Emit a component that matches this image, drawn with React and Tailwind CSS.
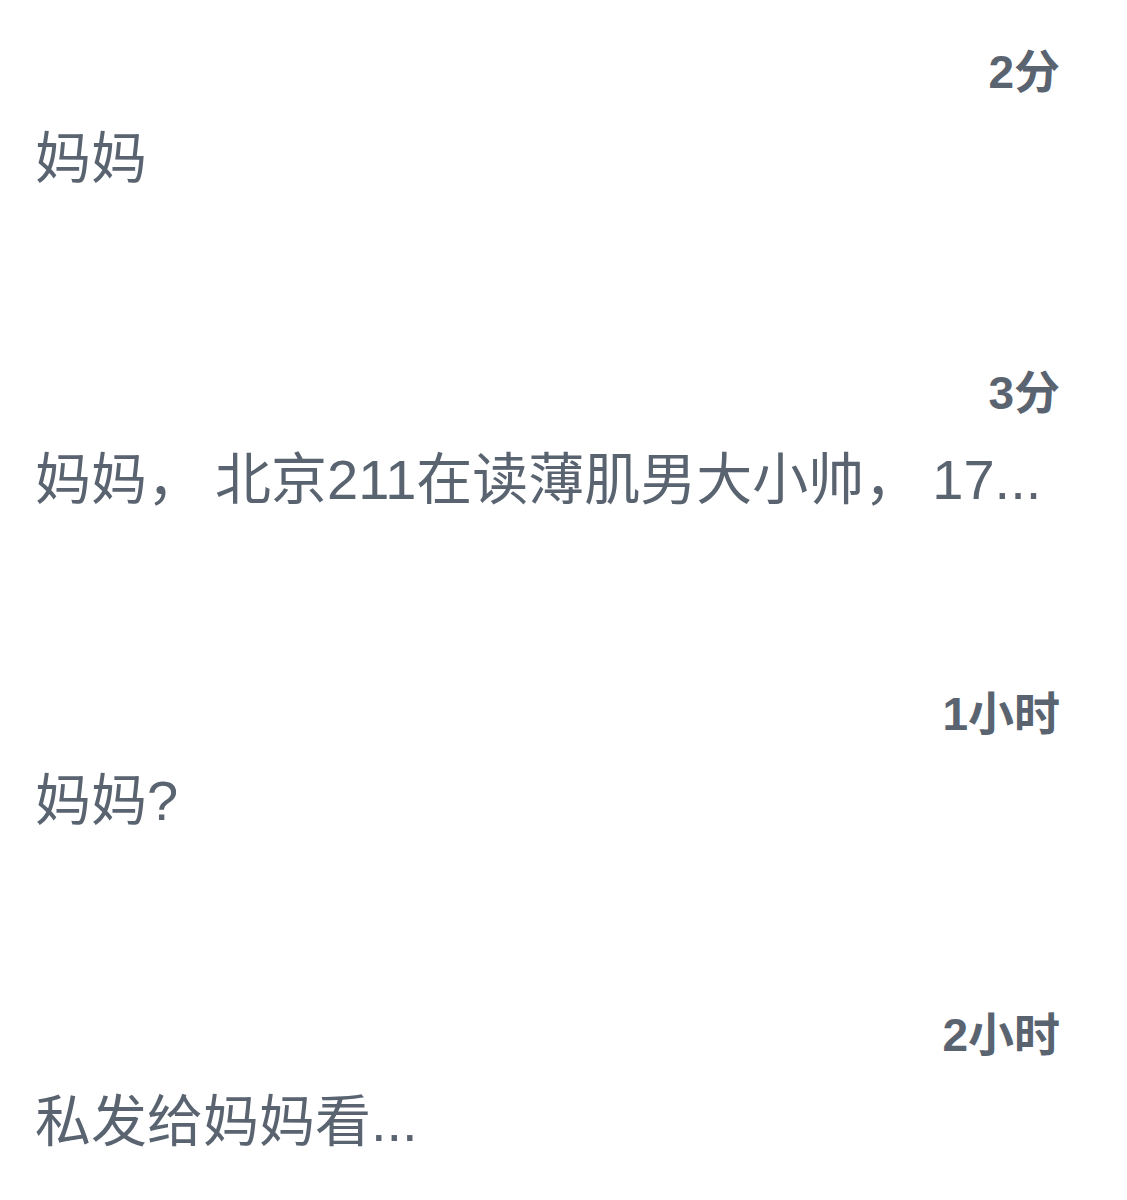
function Msg({ text }) {
  const parts = text.split("，");
  return (
    <>
      {parts.map((p, i) => (
        <span key={i}>
          {p}
          {i < parts.length - 1 && <span className="mr-[12px]">，</span>}
        </span>
      ))}
    </>
  );
}

export default function App() {
  const items = [
    { t: "2分", m: "妈妈" },
    { t: "3分", m: "妈妈，北京211在读薄肌男大小帅，17..." },
    { t: "1小时", m: "妈妈?" },
    { t: "2小时", m: "私发给妈妈看..." },
  ];
  return (
    <div
      className="w-[1127px] h-[1200px] bg-white overflow-hidden flex flex-col gap-[174px] pt-[44px] text-[#5a6470]"
      style={{ fontFamily: '"Liberation Sans", "Noto Sans CJK SC", sans-serif' }}
    >
      {items.map((it, i) => (
        <div key={i} className="flex flex-col">
          <div className="text-right pr-[67px] text-[46px] leading-[56px] font-semibold">{it.t}</div>
          <div className="mt-[27px] pl-[35px] text-[56px] leading-[64px] whitespace-nowrap">
            <Msg text={it.m} />
          </div>
        </div>
      ))}
    </div>
  );
}
